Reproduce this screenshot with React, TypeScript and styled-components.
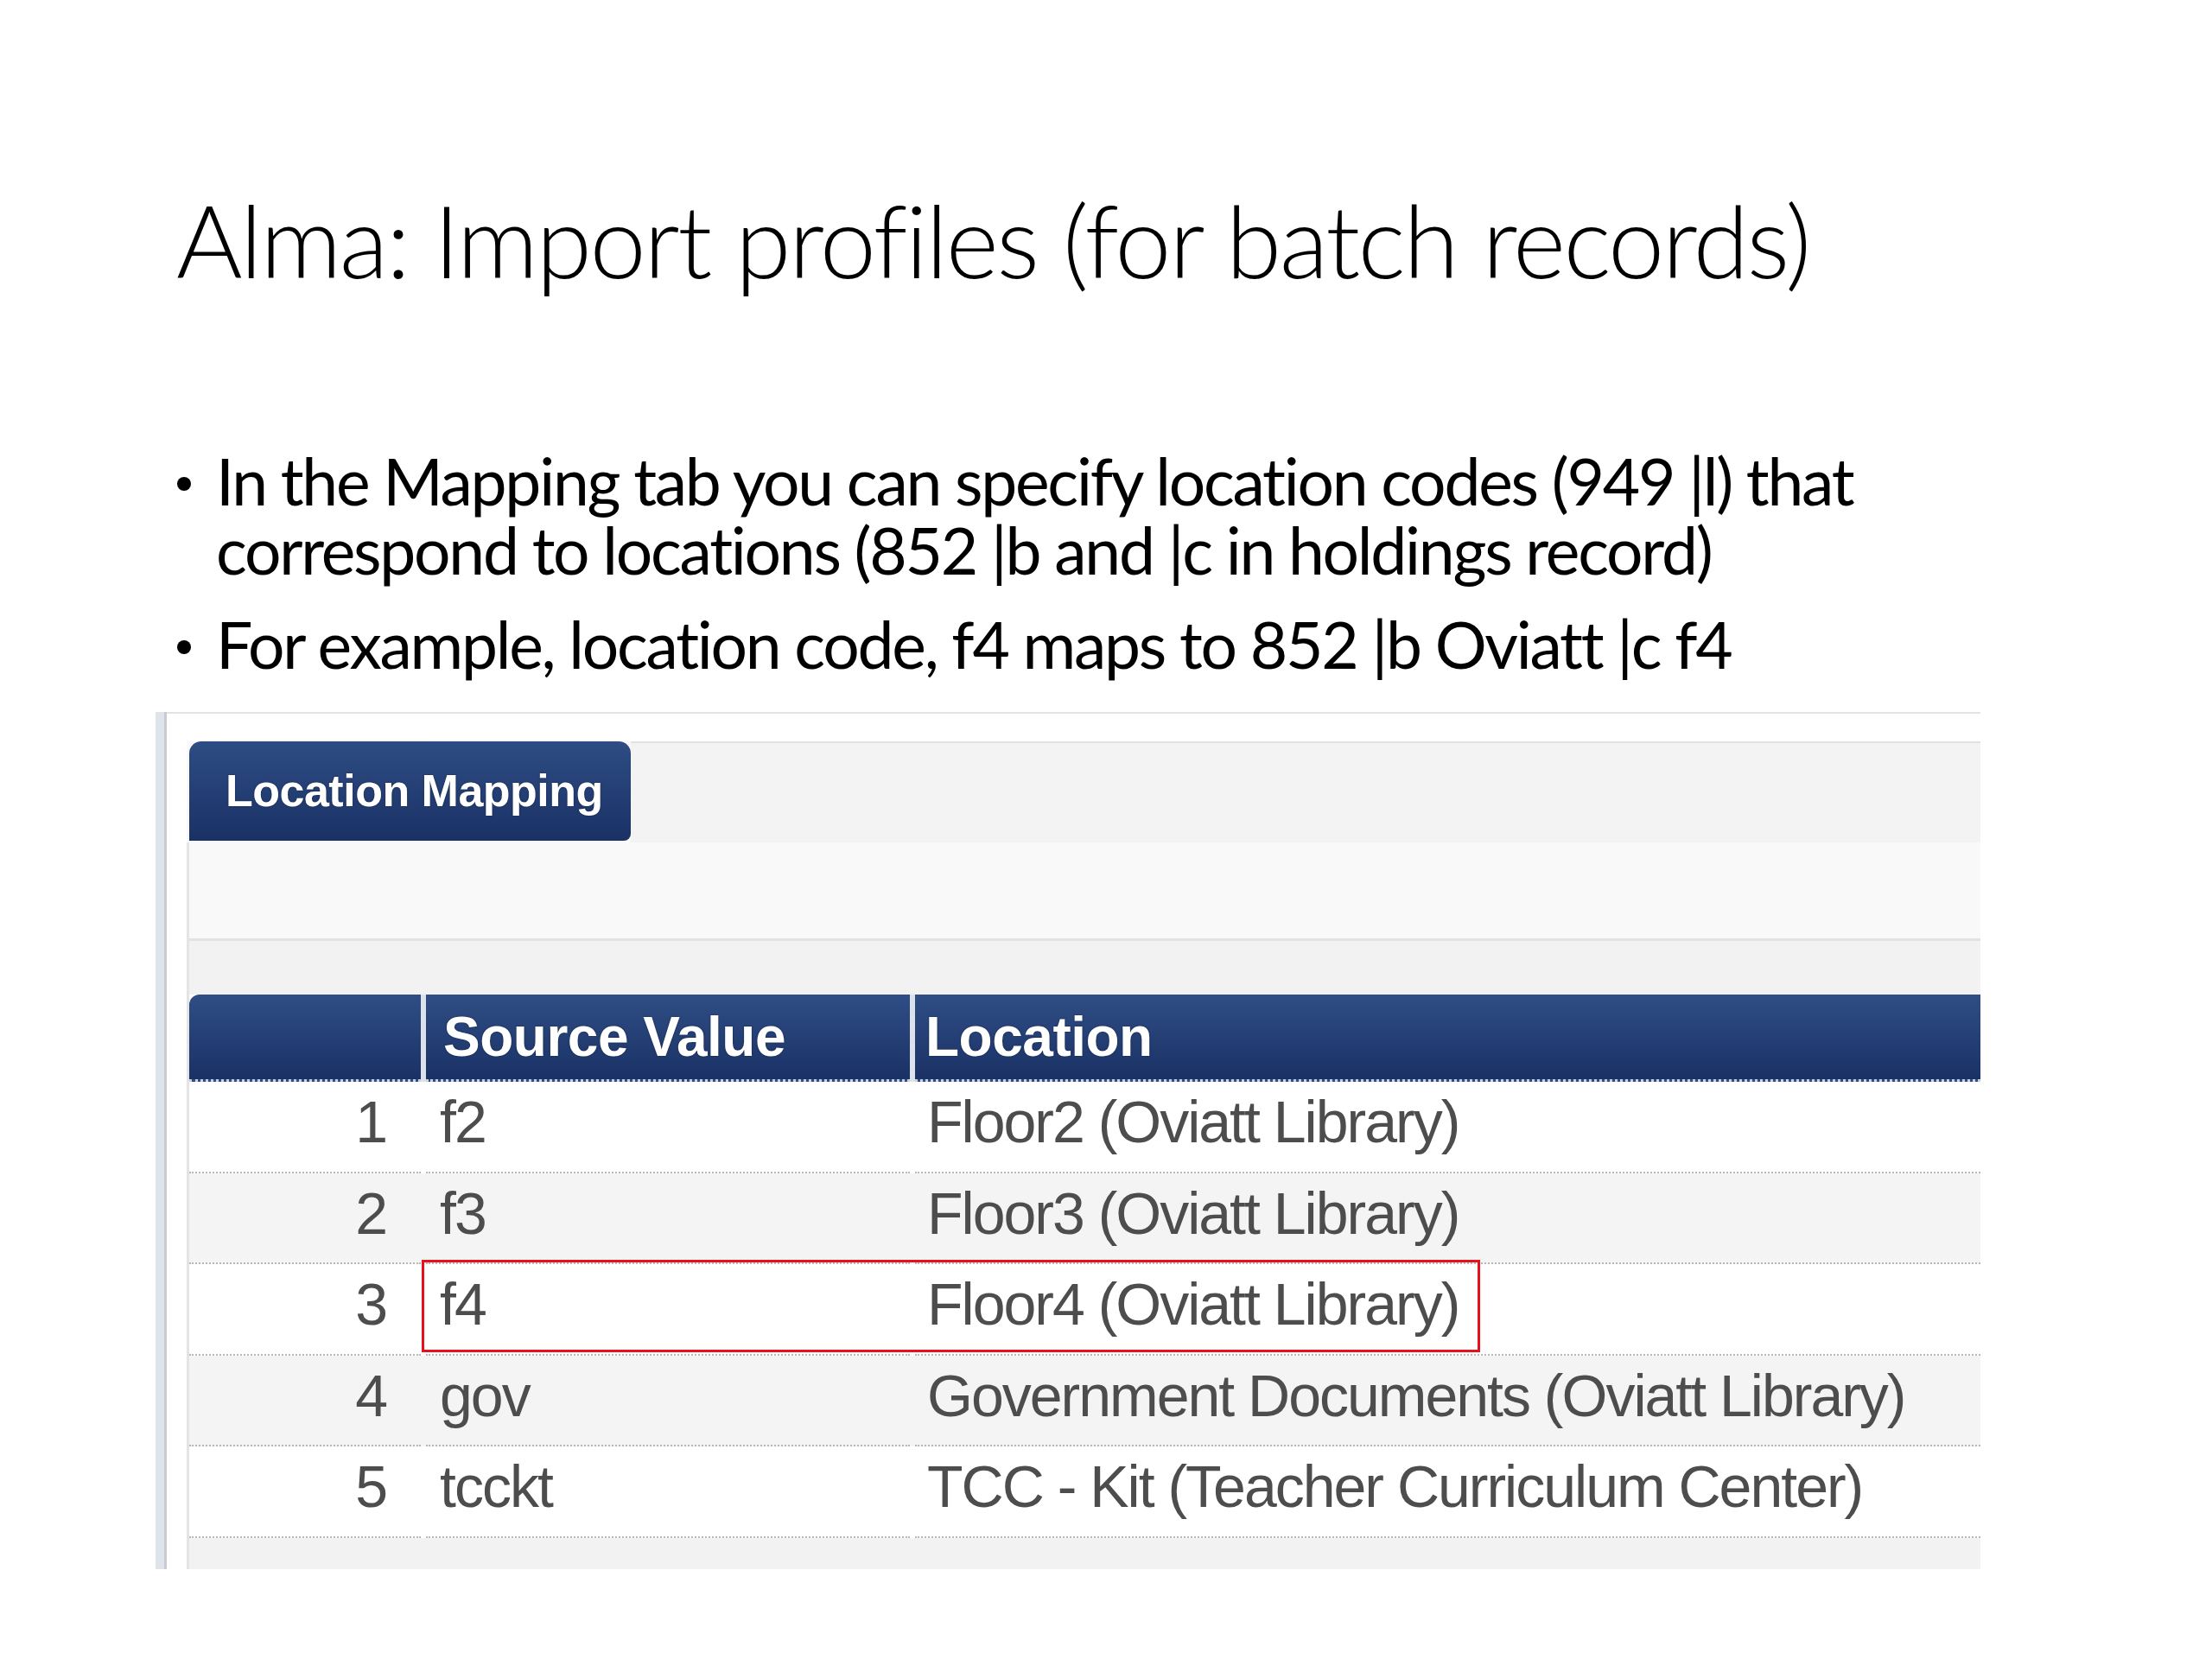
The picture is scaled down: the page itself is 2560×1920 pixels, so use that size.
import React from "react";
import styled, { createGlobalStyle } from "styled-components";

const GlobalStyle = createGlobalStyle`
  html, body { margin: 0; padding: 0; background: #ffffff; }
  body { font-family: Lato, "Open Sans", sans-serif; }
`;

const Slide = styled.div`
  width: 2560px;
  height: 1920px;
  background: #ffffff;
  display: flex;
  flex-direction: column;
  overflow: hidden;
`;

const Title = styled.h1`
  margin: 219px 0 0 204px;
  font-family: Lato, "Open Sans", sans-serif;
  font-weight: 300;
  font-size: 117px;
  line-height: 117px;
  letter-spacing: -2.5px;
  color: #000;
  white-space: nowrap;
`;

const Bullets = styled.ul`
  list-style: none;
  margin: 180px 0 0 205px;
  padding: 0;
  display: flex;
  flex-direction: column;
  gap: 29px;
`;

const BulletItem = styled.li`
  display: flex;
  font-family: Lato, "Open Sans", sans-serif;
  font-size: 75px;
  line-height: 80px;
  letter-spacing: -2.25px;
  color: #000;
  white-space: nowrap;
`;

const DotSlot = styled.span`
  flex: none;
  width: 45px;
  height: 80px;
  display: flex;
  align-items: flex-start;
`;

const Dot = styled.span`
  flex: none;
  display: block;
  width: 16px;
  height: 16px;
  margin-top: 36px;
  border-radius: 50%;
  background: #000;
`;

const Lines = styled.span`
  display: flex;
  flex-direction: column;
`;

const Line = styled.span`
  display: block;
  height: 80px;
`;

const Shot = styled.div`
  margin: 39px 0 0 180px;
  width: 2112px;
  height: 992px;
  display: flex;
  flex: none;
`;

const SideBar = styled.div`
  flex: none;
  width: 10px;
  background: #dfe3ea;
  border-right: 3px solid #c6cbd4;
`;

const Frame = styled.div`
  flex: 1;
  border-top: 2px solid #e3e3e3;
  padding: 32px 0 0 23px;
  display: flex;
  flex-direction: column;
`;

const TabBar = styled.div`
  display: flex;
  height: 117px;
  padding-left: 3px;
  background: #f9f9f9;
`;

const Tab = styled.div`
  flex: none;
  width: 469px;
  height: 115px;
  padding-left: 42px;
  border-radius: 14px 14px 8px 0;
  background: linear-gradient(#2e4d84, #1a3165);
  color: #fff;
  font-family: "Liberation Sans", Arial, sans-serif;
  font-weight: 700;
  font-size: 52px;
  line-height: 115px;
  letter-spacing: -0.5px;
  text-shadow: 0 0 2px rgba(0, 0, 0, 0.5);
`;

const TabFill = styled.div`
  flex: 1;
  border-top: 2px solid #e1e1e1;
  background: #f3f3f3;
`;

const Body = styled.div`
  flex: 1;
  display: flex;
  flex-direction: column;
  border-left: 3px solid #e4e4e4;
`;

const SubHeader = styled.div`
  height: 111px;
  background: #f9f9f9;
  border-bottom: 3px solid #e2e2e2;
`;

const Strip = styled.div<{ $h: number }>`
  height: ${(p) => p.$h}px;
  background: #f2f2f2;
`;

const Cols = `
  display: grid;
  grid-template-columns: 268px 560px 1fr;
  column-gap: 6px;
`;

const HeaderRow = styled.div`
  ${Cols}
  height: 101px;
  background: #dde2ea;
  border-top-left-radius: 12px;
`;

const HeaderCell = styled.div<{ $pad: number; $first?: boolean }>`
  box-sizing: border-box;
  height: 101px;
  padding-left: ${(p) => p.$pad}px;
  background: linear-gradient(#2f4e85, #1a3165);
  border-bottom: 3px dotted rgba(255, 255, 255, 0.75);
  border-top-left-radius: ${(p) => (p.$first ? "12px" : "0")};
  color: #fff;
  font-family: "Liberation Sans", Arial, sans-serif;
  font-weight: 700;
  font-size: 64px;
  line-height: 98px;
  letter-spacing: -0.5px;
  text-shadow: 0 0 2px rgba(0, 0, 0, 0.5);
  white-space: nowrap;
`;

const Row = styled.div<{ $alt: boolean }>`
  ${Cols}
  position: relative;
  height: 105.6px;
  background: ${(p) => (p.$alt ? "#f4f4f4" : "#ffffff")};
`;

const Cell = styled.div<{ $align?: "left" | "right"; $pad: number }>`
  box-sizing: border-box;
  height: 105.6px;
  text-align: ${(p) => p.$align ?? "left"};
  padding-left: ${(p) => (p.$align === "right" ? 0 : p.$pad)}px;
  padding-right: ${(p) => (p.$align === "right" ? p.$pad : 0)}px;
  border-bottom: 2px dotted #b8b8b8;
  color: #4d4d4d;
  font-family: "Liberation Sans", Arial, sans-serif;
  font-size: 68px;
  line-height: 92px;
  letter-spacing: -2px;
  white-space: nowrap;
`;

const Highlight = styled.div`
  position: absolute;
  left: 269px;
  top: -5px;
  width: 1225px;
  height: 107px;
  box-sizing: border-box;
  border: 3px solid #e8101a;
  pointer-events: none;
`;

const rows = [
  { n: 1, src: "f2", loc: "Floor2 (Oviatt Library)" },
  { n: 2, src: "f3", loc: "Floor3 (Oviatt Library)" },
  { n: 3, src: "f4", loc: "Floor4 (Oviatt Library)", highlight: true },
  { n: 4, src: "gov", loc: "Government Documents (Oviatt Library)" },
  { n: 5, src: "tcckt", loc: "TCC - Kit (Teacher Curriculum Center)" },
];

export default function App() {
  return (
    <>
      <GlobalStyle />
      <Slide>
        <Title>Alma: Import profiles (for batch records)</Title>
        <Bullets>
          <BulletItem>
            <DotSlot>
              <Dot />
            </DotSlot>
            <Lines>
              <Line>In the Mapping tab you can specify location codes (949 |l) that</Line>
              <Line>correspond to locations (852 |b and |c in holdings record)</Line>
            </Lines>
          </BulletItem>
          <BulletItem>
            <DotSlot>
              <Dot />
            </DotSlot>
            <Lines>
              <Line>For example, location code, f4 maps to 852 |b Oviatt |c f4</Line>
            </Lines>
          </BulletItem>
        </Bullets>
        <Shot>
          <SideBar />
          <Frame>
            <TabBar>
              <Tab>Location Mapping</Tab>
              <TabFill />
            </TabBar>
            <Body>
              <SubHeader />
              <Strip $h={62} />
              <HeaderRow>
                <HeaderCell $pad={0} $first />
                <HeaderCell $pad={20}>Source Value</HeaderCell>
                <HeaderCell $pad={12}>Location</HeaderCell>
              </HeaderRow>
              {rows.map((r, i) => (
                <Row key={r.n} $alt={i % 2 === 1}>
                  <Cell $align="right" $pad={40}>
                    {r.n}
                  </Cell>
                  <Cell $pad={16}>{r.src}</Cell>
                  <Cell $pad={14}>{r.loc}</Cell>
                  {r.highlight && <Highlight />}
                </Row>
              ))}
              <Strip $h={36} />
            </Body>
          </Frame>
        </Shot>
      </Slide>
    </>
  );
}
